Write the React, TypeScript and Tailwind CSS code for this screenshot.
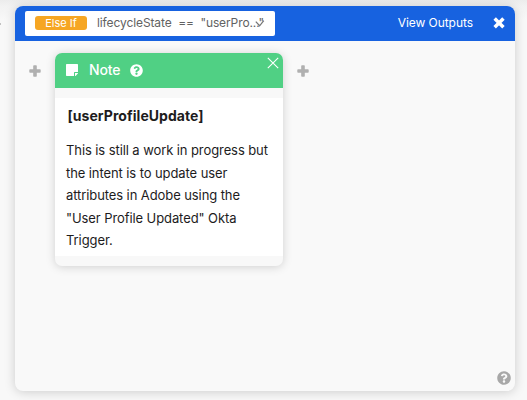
import React from "react";
import { FaQuestionCircle } from "react-icons/fa";

function Plus() {
  return (
    <svg viewBox="0 0 12 12" className="size-3 shrink-0" fill="#b0b0b0" aria-hidden="true">
      <path d="M5 0.3h2q.8 0 .8.8v3.1h3.1q.8 0 .8.8v2q0 .8-.8.8H7.8v3.1q0 .8-.8.8H5q-.8 0-.8-.8V7.8H1.1q-.8 0-.8-.8V5q0-.8.8-.8h3.1V1.1q0-.8.8-.8Z" />
    </svg>
  );
}

function Cross() {
  return (
    <svg viewBox="0 0 12 12" className="size-3" fill="none" stroke="#fff" strokeWidth="3.5" aria-hidden="true">
      <path d="M2.9 2.7l6.3 6.3M9.2 2.7L2.9 9" strokeLinecap="square" />
    </svg>
  );
}

function NoteCard() {
  return (
    <section className="h-[213px] w-[228px] overflow-hidden rounded-[7px] bg-[#f8f8f8] shadow-[0_1px_10px_rgba(0,0,0,0.17)]">
      <header className="relative flex h-[35px] items-center bg-[#50d084] pl-[11px] text-white">
        <svg viewBox="0 0 12 12" className="-mt-px size-3" fill="#fff" aria-hidden="true">
          <path d="M.7 0h10.6q.7 0 .7.7V8H8.7q-.7 0-.7.7V12H.7Q0 12 0 11.3V.7Q0 0 .7 0ZM9 9h3q0 .5-.3.8L9.8 11.7Q9.5 12 9 12Z" />
        </svg>
        <span className="-mt-px ml-[11px] w-[41px] text-[14px] leading-5 font-medium tracking-[-0.1px]">Note</span>
        <FaQuestionCircle className="-mt-px size-[13px]" />
        <svg viewBox="0 0 12 12" className="absolute top-1 right-1 size-3" fill="none" stroke="#fff" strokeWidth="1.1" aria-hidden="true">
          <path d="M.8.8l10.4 10.4M11.2.8L.8 11.2" />
        </svg>
      </header>
      <div className="mt-[10px] h-[158px] bg-white px-[11px] pt-[7px] text-[#1d1c1d]">
        <h2 className="pl-[1.5px] text-[14px] leading-[22px] font-bold tracking-[0.05px]">[userProfileUpdate]</h2>
        <p className="mt-3 text-[13px] leading-[22.5px] tracking-[-0.09px] whitespace-nowrap">
          This is still a work in progress but<br />
          the intent is to update user<br />
          attributes in Adobe using the<br />
          "User Profile Updated" Okta<br />
          Trigger.
        </p>
      </div>
    </section>
  );
}

export default function App() {
  return (
    <main className="h-[400px] w-[527px] overflow-hidden bg-[linear-gradient(#ececec,#f2f2f2_6px,#f8f8f8_20px)] pt-[6px] font-['Inter',sans-serif]">
      <div className="flex">
        <div className="w-[15px] pt-[17px]">
          <div className="h-[2px] w-[1px] bg-[#c2c2c2]" />
        </div>
        <section className="flex h-[385px] w-[500px] flex-col overflow-hidden rounded-[8px] bg-[#f9f9f9] shadow-[0_1px_11px_rgba(0,0,0,0.18)]">
          <header className="flex h-[35px] items-center bg-[#1762e0] px-[10px] text-white">
            <div className="relative flex h-[25px] w-[250px] items-center rounded-[2px] bg-white pl-[10px]">
              <span className="-mt-px flex h-[14px] w-[52px] items-center justify-center rounded-[3px] bg-[#f6a623] pt-px text-[11px] leading-none">Else If</span>
              <span className="-mt-px ml-[10px] text-[12px] leading-5 tracking-[-0.1px] whitespace-pre text-[#626262]">lifecycleState  ==  "userPro..."</span>
              <svg viewBox="0 0 10 10" className="absolute top-[7px] right-[10px] h-[10px] w-[10px]" fill="none" stroke="#777" strokeWidth="1.3" aria-hidden="true">
                <path d="M.8 3.6l3.8 4.2 4.2-5.2" />
              </svg>
            </div>
            <span className="-mt-px ml-auto text-[12px] leading-5 tracking-[-0.05px]">View Outputs</span>
            <span className="-mt-px ml-5"><Cross /></span>
          </header>
          <div className="flex flex-1 items-start pt-3 pl-[14px]">
            <div className="mt-[12px] mr-[14px]"><Plus /></div>
            <NoteCard />
            <div className="mt-[12px] ml-[14px]"><Plus /></div>
          </div>
          <footer className="flex justify-end pr-[4.5px] pb-[6.5px]">
            <FaQuestionCircle className="size-[14px] text-[#a8a8a8]" />
          </footer>
        </section>
      </div>
    </main>
  );
}
